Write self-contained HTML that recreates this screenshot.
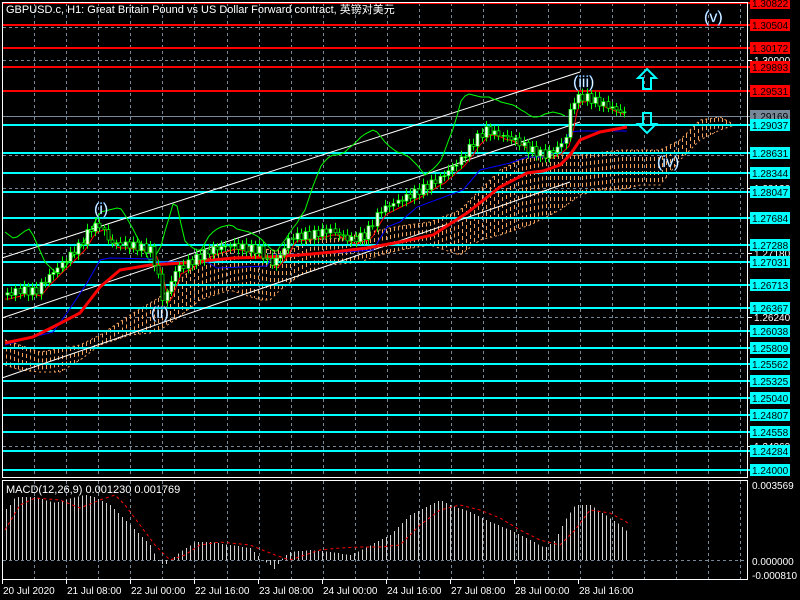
<!DOCTYPE html>
<html><head><meta charset="utf-8"><style>
html,body{margin:0;padding:0;background:#000;width:800px;height:600px;overflow:hidden}
svg{display:block}
text{font-family:"Liberation Sans","Noto Sans CJK SC",sans-serif}
</style></head><body>
<svg id="s" width="800" height="600" xmlns="http://www.w3.org/2000/svg">
<rect width="800" height="600" fill="#000"/>
<g id="grid"></g>
<g id="cloud"></g>
<g id="hl"></g>
<g id="chan" stroke="#fff" stroke-width="1">
<line x1="2" y1="258" x2="580" y2="72"/>
<line x1="2" y1="318" x2="580" y2="122"/>
<line x1="2" y1="378" x2="570" y2="182"/>
</g>
<g id="ind"></g>
<g id="macd"></g>
<g fill="none" stroke="#fff" stroke-width="1">
<rect x="2.5" y="2.5" width="745" height="475"/>
<rect x="2.5" y="480.5" width="745" height="99"/>
</g>
<g id="axis"></g>
<text x="6" y="13" font-size="11" fill="#fff">GBPUSD.c, H1:  Great Britain Pound vs US Dollar Forward contract, 英镑对美元</text>
<text x="6" y="493" font-size="11" fill="#fff">MACD(12,26,9) 0.001230 0.001769</text>
<g font-size="16" fill="#fff" stroke="#1e90ff" stroke-width="0.3">
<text x="94" y="214">(i)</text>
<text x="151" y="318">(ii)</text>
<text x="573" y="87">(iii)</text>
<text x="657" y="167">(iv)</text>
<text x="704" y="22">(v)</text>
</g>
<g fill="none" stroke="#00ffff" stroke-width="2">
<path d="M647 69 L656 78 L651 78 L651 89 L643 89 L643 78 L638 78 Z"/>
<path d="M643 113 L651 113 L651 124 L656 124 L647 133 L638 124 L643 124 Z"/>
</g>
</svg>
<script>
(function(){
var N='http://www.w3.org/2000/svg';
function el(p,t,a){var e=document.createElementNS(N,t);for(var k in a)e.setAttribute(k,a[k]);document.getElementById(p).appendChild(e);return e;}
function interp(pts,x){for(var i=0;i<pts.length-1;i++){if(x>=pts[i][0]&&x<=pts[i+1][0]){var t=(x-pts[i][0])/(pts[i+1][0]-pts[i][0]);return pts[i][1]+t*(pts[i+1][1]-pts[i][1]);}}return x<pts[0][0]?pts[0][1]:pts[pts.length-1][1];}
function pl(pts){return pts.map(function(p){return p[0]+','+p[1]}).join(' ');}
for(var x=34;x<747;x+=32.1){el('grid','line',{x1:Math.round(x)+.5,y1:3,x2:Math.round(x)+.5,y2:478,stroke:'#778899','stroke-dasharray':'3,3'});el('grid','line',{x1:Math.round(x)+.5,y1:481,x2:Math.round(x)+.5,y2:579,stroke:'#778899','stroke-dasharray':'3,3'});}
[27,60,155,188,253,317,381,446].forEach(function(y){el('grid','line',{x1:3,y1:y+.5,x2:747,y2:y+.5,stroke:'#778899','stroke-dasharray':'3,3'});});
el('grid','line',{x1:3,y1:560.5,x2:747,y2:560.5,stroke:'#778899','stroke-dasharray':'3,3'});
var up=[[5,340],[40,352],[80,345],[100,335],[130,315],[155,300],[170,290],[200,260],[230,250],[250,246],[270,250],[290,250],[310,240],[340,238],[370,232],[400,226],[430,222],[460,210],[480,190],[500,170],[520,160],[545,155],[580,155],[620,150],[660,150],[680,140],[700,120],[720,117],[735,125]];
var lo=[[5,365],[20,370],[40,372],[60,372],[80,360],[100,345],[130,335],[150,333],[160,330],[175,320],[200,300],[230,290],[260,300],[270,300],[280,290],[300,275],[330,265],[360,262],[380,255],[400,250],[430,245],[460,255],[480,240],[500,235],[530,225],[560,210],[580,195],[600,190],[620,190],[640,185],[660,185],[680,160],[700,140],[720,130],[735,125]];
for(var x=6;x<=734;x+=4){var a=interp(up,x),b=interp(lo,x);if(b-a<1)continue;el('cloud','line',{x1:x+.5,y1:a,x2:x+.5,y2:b,stroke:'#f5a35f','stroke-dasharray':'4,3','shape-rendering':'crispEdges'});}
el('cloud','polyline',{points:pl(up),fill:'none',stroke:'#f5a35f','stroke-dasharray':'2,3'});
el('cloud','polyline',{points:pl(lo),fill:'none',stroke:'#f5a35f','stroke-dasharray':'2,3'});
var red=[[3,'1.30822'],[25,'1.30504'],[48,'1.30172'],[67,'1.29893'],[91,'1.29531']];
var cy=[[125,'1.29037'],[153,'1.28631'],[173,'1.28344'],[192,'1.28047'],[218,'1.27684'],[245,'1.27288'],[262,'1.27031'],[285,'1.26713'],[308,'1.26367'],[331,'1.26038'],[348,'1.25809'],[364,'1.25562'],[381,'1.25325'],[398,'1.25040'],[415,'1.24807'],[432,'1.24558'],[451,'1.24284'],[470,'1.24000']];
var gt=[[60,'1.30000'],[188,'1.28120'],[253,'1.27180'],[317,'1.26240'],[446,'1.24260']];
gt.forEach(function(g){el('axis','line',{x1:747,y1:g[0]+.5,x2:752,y2:g[0]+.5,stroke:'#fff'});var t=el('axis','text',{x:754,y:g[0]+4,'font-size':'10',fill:'#fff'});t.textContent=g[1];});
red.forEach(function(r){el('hl','line',{x1:3,y1:r[0],x2:750,y2:r[0],stroke:'#ff0000','stroke-width':2});el('axis','rect',{x:750,y:r[0]-6,width:40,height:12,fill:'#ff0000'});var t=el('axis','text',{x:752,y:r[0]+4,'font-size':'10',fill:'#000'});t.textContent=r[1];});
el('hl','line',{x1:3,y1:116.5,x2:750,y2:116.5,stroke:'#778899'});
el('axis','rect',{x:750,y:110,width:40,height:12,fill:'#778899'});
var tg=el('axis','text',{x:752,y:120,'font-size':'10',fill:'#000'});tg.textContent='1.29169';
cy.forEach(function(r){el('hl','line',{x1:3,y1:r[0],x2:750,y2:r[0],stroke:'#00ffff','stroke-width':2});el('axis','rect',{x:750,y:r[0]-6,width:40,height:12,fill:'#00ffff'});var t=el('axis','text',{x:752,y:r[0]+4,'font-size':'10',fill:'#000'});t.textContent=r[1];});
el('axis','line',{x1:747.5,y1:2,x2:747.5,y2:478,stroke:'#fff'});
[[485,'0.003569'],[561,'0.000000'],[575,'-0.000810']].forEach(function(r){var t=el('axis','text',{x:752,y:r[0]+4,'font-size':'10',fill:'#fff'});t.textContent=r[1];});
var tl=[[2,'20 Jul 2020'],[66,'21 Jul 08:00'],[130,'22 Jul 00:00'],[194,'22 Jul 16:00'],[258,'23 Jul 08:00'],[322,'24 Jul 00:00'],[386,'24 Jul 16:00'],[450,'27 Jul 08:00'],[514,'28 Jul 00:00'],[578,'28 Jul 16:00']];
tl.forEach(function(r){el('axis','line',{x1:r[0]+.5,y1:580,x2:r[0]+.5,y2:584,stroke:'#fff'});var t=el('axis','text',{x:r[0]+1,y:594,'font-size':'10',fill:'#fff'});t.textContent=r[1];});
var chik=[[5,230],[15,240],[30,230],[45,260],[60,275],[80,250],[100,210],[120,210],[140,240],[150,260],[160,250],[175,200],[185,240],[200,250],[210,235],[230,225],[250,230],[275,255],[290,230],[305,210],[320,170],[330,155],[345,150],[360,140],[375,130],[390,145],[410,160],[425,175],[440,160],[455,125],[462,100],[470,95],[490,95],[505,105],[520,110],[535,115],[550,113],[565,118]];
var c2=[];for(var x=5;x<=565;x+=4){c2.push([x,Math.round(interp(chik,x)+(Math.sin(x*1.7)*2.5))]);}
el('ind','polyline',{points:pl(c2),fill:'none',stroke:'#00ff00'});
var price=[[5,295],[20,290],[35,292],[45,280],[55,270],[65,260],[80,245],[90,228],[100,225],[110,243],[130,245],[150,250],[158,275],[162,300],[168,290],[175,270],[190,262],[210,250],[230,245],[245,248],[260,250],[270,265],[280,255],[290,237],[310,235],[330,230],[350,240],[365,235],[380,210],[400,200],[420,190],[440,178],[460,160],[475,140],[485,130],[500,135],[515,140],[530,150],[545,155],[555,150],[565,140],[570,110],[575,98],[585,97],[600,103],[612,108],[628,115]];
var tk=[];for(var x=5;x<=628;x+=4){tk.push([x,Math.round(interp(price,x-6)+4)]);}
el('ind','polyline',{points:pl(tk),fill:'none',stroke:'#ff0000'});
var blue=[[5,345],[33,337],[53,332],[67,313],[87,283],[100,260],[110,258],[153,259],[157,262],[207,262],[217,268],[267,266],[273,255],[333,253],[373,250],[387,227],[400,222],[417,207],[463,190],[480,170],[510,163],[527,157],[547,157],[560,148],[570,132],[580,131],[627,131]];
el('ind','polyline',{points:pl(blue),fill:'none',stroke:'#0000ff'});
var redm=[[5,343],[33,337],[53,327],[80,313],[100,287],[120,270],[150,265],[183,263],[233,258],[267,257],[300,255],[333,252],[367,248],[400,242],[433,235],[467,213],[500,187],[527,173],[543,171],[560,165],[570,155],[580,140],[600,132],[627,127]];
el('ind','polyline',{points:pl(redm),fill:'none',stroke:'#ff0000','stroke-width':3});
var prev=interp(price,5);
for(var x=7;x<=628;x+=4.2){var c=interp(price,x)+Math.sin(x*2.3)*4;var o=prev;var hi=Math.min(o,c)-3-Math.abs(Math.sin(x))*3,lw=Math.max(o,c)+3+Math.abs(Math.cos(x))*3;
var xx=Math.round(x);
el('ind','line',{x1:xx+.5,y1:hi,x2:xx+.5,y2:lw,stroke:'#00ff00'});
var bt=Math.min(o,c),h=Math.max(1,Math.abs(o-c));el('ind','rect',{x:xx-1,y:bt,width:3,height:h,fill:c<o?'#fff':'#000',stroke:'#00ff00','stroke-width':0.7});prev=c;}
var hist=[[5,510],[10,505],[15,497],[25,497],[35,497],[45,500],[55,503],[65,500],[75,497],[85,495],[95,497],[100,500],[110,505],[120,515],[130,525],[140,535],[150,545],[157,560],[160,563],[165,565],[170,560],[180,552],[195,542],[210,542],[230,545],[250,548],[262,560],[270,565],[275,570],[280,560],[290,552],[310,550],[330,552],[350,555],[365,548],[380,540],[390,535],[400,525],[410,515],[420,510],[430,505],[440,500],[450,505],[470,512],[490,522],[510,530],[530,540],[545,548],[555,540],[565,520],[575,505],[590,505],[605,515],[620,525],[628,532]];
for(var x=6;x<=628;x+=4){var y=interp(hist,x);el('macd','line',{x1:x+.5,y1:560,x2:x+.5,y2:y,stroke:'#d0d0d0','shape-rendering':'crispEdges'});}
var sig=[[5,530],[20,505],[35,498],[60,500],[80,508],[100,500],[115,495],[125,505],[140,525],[155,545],[170,560],[185,555],[200,545],[220,542],[250,545],[275,555],[290,560],[305,555],[320,550],[340,548],[360,547],[380,547],[400,545],[420,525],[440,510],[460,505],[480,510],[500,518],[520,530],[540,540],[560,545],[575,530],[590,510],[610,513],[628,523]];
el('macd','polyline',{points:pl(sig),fill:'none',stroke:'#ff0000','stroke-dasharray':'3,3'});
})();
</script>
</body></html>
